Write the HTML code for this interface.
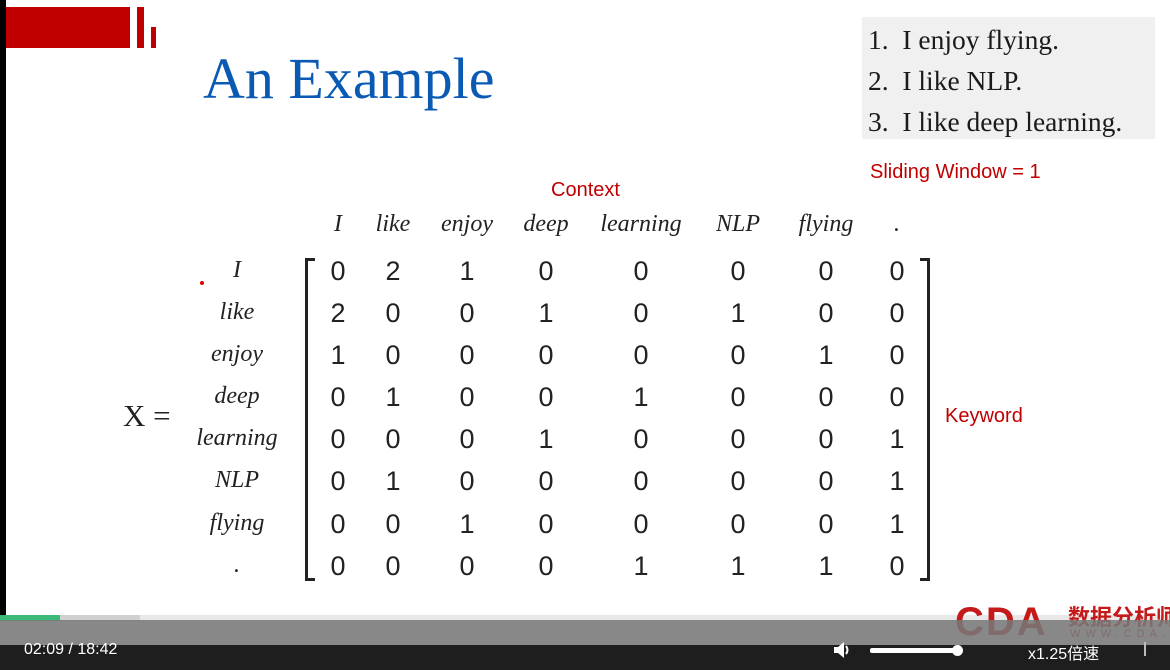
<!DOCTYPE html>
<html><head><meta charset="utf-8"><style>
*{margin:0;padding:0;box-sizing:border-box}
body{width:1170px;height:670px;overflow:hidden;background:#fff;position:relative;font-family:"Liberation Sans",sans-serif}
.a{position:absolute;white-space:nowrap}
.n{position:absolute;font-size:27px;color:#222;transform:translateX(-50%);top:0}
.l{position:absolute;font-family:"Liberation Serif",serif;font-style:italic;font-size:24px;color:#222;transform:translateX(-50%);font-weight:500}
</style></head><body>
<div class="a" style="left:0;top:0;width:6px;height:616px;background:#000"></div>
<div class="a" style="left:6px;top:7px;width:124px;height:41px;background:#c00000"></div>
<div class="a" style="left:137px;top:7px;width:7px;height:41px;background:#c00000"></div>
<div class="a" style="left:151px;top:27px;width:5px;height:21px;background:#c00000"></div>
<div class="a" style="left:203px;top:45px;font-family:'Liberation Serif',serif;font-size:58px;color:#0a5ab4">An Example</div>
<div class="a" style="left:862px;top:17px;width:293px;height:122px;background:#f0f0f0"></div>
<div class="a" style="left:868px;top:19px;font-family:'Liberation Serif',serif;font-size:27.5px;color:#1a1a1a;line-height:41px">1.&nbsp; I enjoy flying.<br>2.&nbsp; I like NLP.<br>3.&nbsp; I like deep learning.</div>
<div class="a" style="left:870px;top:161px;font-size:20px;color:#c00000">Sliding Window = 1</div>
<div class="a" style="left:551px;top:179px;font-size:20px;color:#c00000">Context</div>
<div class="a" style="left:945px;top:405px;font-size:20px;color:#c00000">Keyword</div>
<div class="a" style="left:123px;top:398px;font-family:'Liberation Serif',serif;font-size:31px;color:#222">X =</div>
<div class="a" style="left:305px;top:258px;width:10px;height:323px;border:3px solid #222;border-right:none"></div>
<div class="a" style="left:920px;top:258px;width:10px;height:323px;border:3px solid #222;border-left:none"></div>
<div id="m"></div>
<div class="a" style="left:200px;top:281px;width:4px;height:4px;border-radius:50%;background:#d00"></div>
<div class="a" style="left:0;top:615px;width:1170px;height:6px;background:#e8e8e8"></div>
<div class="a" style="left:0;top:615px;width:140px;height:6px;background:#d0d0d0"></div>
<div class="a" style="left:0;top:615px;width:60px;height:6px;background:#3cb878"></div>
<div class="a" style="left:955px;top:600px;font-size:40px;font-weight:bold;color:#c41a1a;letter-spacing:2px">CDA</div>
<div class="a" style="left:1068px;top:600px;font-size:22px;font-weight:bold;color:#c41a1a;font-family:'Liberation Sans','Noto Sans CJK SC',sans-serif">数据分析师</div>
<div class="a" style="left:1070px;top:628px;font-size:11px;color:#c41a1a;letter-spacing:5px">WWW.CDA.CN</div>
<div class="a" style="left:0;top:620px;width:1170px;height:25px;background:rgba(120,120,120,0.88)"></div>
<div class="a" style="left:0;top:645px;width:1170px;height:25px;background:#1e1e1e"></div>
<div class="a" style="left:24px;top:641px;font-size:16px;color:#fff">02:09 / 18:42</div>
<svg class="a" style="left:832px;top:640px" width="22" height="20" viewBox="0 0 22 20"><path d="M2 7h4l6-5v16l-6-5H2z" fill="#fff"/><path d="M14 6q3 4 0 8" stroke="#fff" stroke-width="2" fill="none"/></svg>
<div class="a" style="left:870px;top:648px;width:88px;height:5px;background:#fff;border-radius:2px"></div>
<div class="a" style="left:952px;top:645px;width:11px;height:11px;border-radius:50%;background:#fff"></div>
<div class="a" style="left:1028px;top:640px;font-size:16px;color:#fff;font-family:'Liberation Sans','Noto Sans CJK SC',sans-serif">x1.25倍速</div>
<div class="a" style="left:1144px;top:642px;width:2px;height:14px;background:#bbb"></div>
<script>
var cx=[338,393,467,546,641,738,826,897],ry=[256,298,340,382,424,466,509,551];
var hd=["I","like","enjoy","deep","learning","NLP","flying","."];
var M=[[0,2,1,0,0,0,0,0],[2,0,0,1,0,1,0,0],[1,0,0,0,0,0,1,0],[0,1,0,0,1,0,0,0],[0,0,0,1,0,0,0,1],[0,1,0,0,0,0,0,1],[0,0,1,0,0,0,0,1],[0,0,0,0,1,1,1,0]];
var h="";
for(var i=0;i<8;i++){h+='<div class="l" style="left:'+cx[i]+'px;top:211px">'+hd[i]+'</div>';
h+='<div class="l" style="left:237px;top:'+(ry[i]+1)+'px">'+hd[i]+'</div>';
for(var j=0;j<8;j++)h+='<div class="n" style="left:'+cx[j]+'px;top:'+ry[i]+'px">'+M[i][j]+'</div>';}
document.getElementById("m").innerHTML=h;
</script>
</body></html>
